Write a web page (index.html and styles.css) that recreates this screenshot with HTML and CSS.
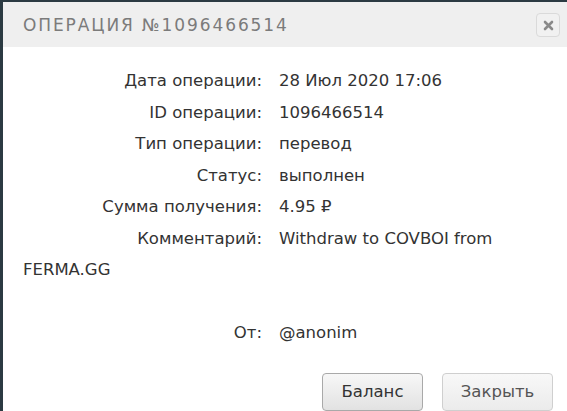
FILE: index.html
```html
<!DOCTYPE html>
<html lang="ru">
<head>
<meta charset="utf-8">
<title>Операция</title>
<link rel="stylesheet" href="styles.css">
</head>
<body>
<div class="modal">
  <div class="modal-header">
    <h3 class="modal-title">Операция №1096466514</h3>
    <button class="close" type="button" aria-label="Закрыть">
      <svg width="11" height="11" viewBox="0 0 11 11"><path d="M2 2L9 9M9 2L2 9" stroke="#8a8a8a" stroke-width="2.6" stroke-linecap="round"/></svg>
    </button>
  </div>
  <div class="modal-body">
    <div class="row"><span class="label">Дата операции:</span><span class="value">28 Июл 2020 17:06</span></div>
    <div class="row"><span class="label">ID операции:</span><span class="value">1096466514</span></div>
    <div class="row"><span class="label">Тип операции:</span><span class="value">перевод</span></div>
    <div class="row"><span class="label">Статус:</span><span class="value">выполнен</span></div>
    <div class="row"><span class="label">Сумма получения:</span><span class="value">4.95 ₽</span></div>
    <div class="row"><span class="label">Комментарий:</span><span class="value">Withdraw to COVBOI from FERMA.GG</span></div>
    <div class="row empty">&nbsp;</div>
    <div class="row"><span class="label">От:</span><span class="value">@anonim</span></div>
  </div>
  <div class="modal-footer">
    <button class="btn" type="button">Баланс</button>
    <button class="btn btn-light" type="button">Закрыть</button>
  </div>
</div>
</body>
</html>
```

FILE: styles.css
```css
html, body {
  margin: 0;
  padding: 0;
  height: 100%;
  overflow: hidden;
}
body {
  background: #2b3a42;
  font-family: "DejaVu Sans", "Noto Sans", sans-serif;
  color: #333;
}
.modal {
  margin: 2px 0 0 3px;
  background: #fff;
  height: calc(100% - 2px);
}
.modal-header {
  height: 45px;
  background: #efefef;
  display: flex;
  align-items: center;
  justify-content: space-between;
  padding: 0 7px 0 20px;
}
.modal-title {
  margin: 0;
  font-size: 17px;
  font-weight: normal;
  text-transform: uppercase;
  letter-spacing: 1.9px;
  color: #7b7b7b;
}
.close {
  width: 24px;
  height: 24px;
  margin-top: 1px;
  padding: 0;
  border: 1px solid #dadada;
  border-radius: 4px;
  background: #f1f1f1;
  display: flex;
  align-items: center;
  justify-content: center;
}
.modal-body {
  padding: 18px 40px 0 20px;
  font-size: 16.5px;
  line-height: 31.5px;
}
.label {
  display: inline-block;
  width: 239px;
  margin-right: 17px;
  text-align: right;
}
.modal-footer {
  display: flex;
  justify-content: flex-end;
  gap: 19px;
  padding: 24px 14px 0 0;
}
.btn {
  height: 38px;
  width: 101px;
  padding: 0;
  font-family: "DejaVu Sans", sans-serif;
  font-size: 16.5px;
  color: #333;
  border: 1px solid #a9a9a9;
  border-radius: 4px;
  background: linear-gradient(#f7f7f7, #e2e2e2);
}
.btn-light {
  width: 111px;
  color: #555;
  border-color: #cfcfcf;
  background: linear-gradient(#f8f8f8, #ebebeb);
}
```
